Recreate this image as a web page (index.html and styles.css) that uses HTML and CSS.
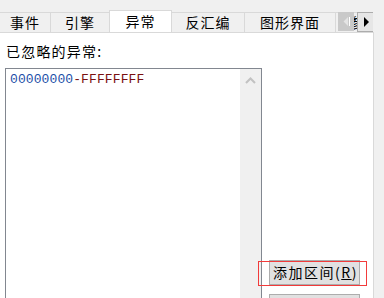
FILE: index.html
```html
<!DOCTYPE html>
<html>
<head>
<meta charset="utf-8">
<link rel="stylesheet" href="styles.css">
</head>
<body>
<div class="tabbar">
  <div class="tab t1">事件</div>
  <div class="tab t2">引擎</div>
  <div class="tab t3 active">异常</div>
  <div class="tab t4">反汇编</div>
  <div class="tab t5">图形界面</div>
  <div class="tab t6">参</div>
  <div class="scrollbtns">
    <div class="sbtn left"><svg width="16" height="19" viewBox="0 0 16 19"><polygon points="10,5 10,14 5.5,9.5" fill="#e4e4e4"/><rect x="11" y="5" width="1" height="9" fill="#fff"/></svg></div>
    <div class="sbtn right"><svg width="16" height="18" viewBox="0 0 16 18"><polygon points="6,4 6,14 11,9" fill="#000"/></svg></div>
  </div>
</div>
<div class="panel">
  <div class="label">已忽略的异常:</div>
  <div class="content">
    <div class="listbox">
      <div class="items">
        <div class="item"><span class="lo">00000000</span><span class="hi">-FFFFFFFF</span></div>
      </div>
      <div class="vscroll"><svg width="21" height="22" viewBox="0 0 21 22"><polyline points="6,14 10.5,9.5 15,14" fill="none" stroke="#c2c2c2" stroke-width="2"/></svg></div>
    </div>
    <div class="side">
      <div class="btn">添加区间(<u>R</u>)</div>
      <div class="btn second"></div>
      <div class="highlight"></div>
    </div>
  </div>
</div>
</body>
</html>
```
FILE: styles.css
```css
html, body {
  margin: 0;
  padding: 0;
}
body {
  width: 384px;
  height: 298px;
  overflow: hidden;
  background: #f0f0f0;
  font-family: "Noto Sans CJK SC", "Microsoft YaHei", sans-serif;
  font-size: 14px;
  color: #000;
}
.tabbar {
  position: relative;
  height: 32px;
  padding-top: 12px;
  box-sizing: border-box;
  display: flex;
  width: 373px;
  overflow: hidden;
}
.tab {
  height: 20px;
  box-sizing: border-box;
  border-top: 1px solid #d9d9d9;
  border-right: 1px solid #d9d9d9;
  line-height: 19px;
  text-align: center;
  flex: none;
  background: #f0f0f0;
  letter-spacing: 1px;
}
.t1 { width: 51px; }
.t2 { width: 59px; }
.t3 { width: 63px; }
.t4 { width: 73px; }
.t5 { width: 91px; }
.t6 { width: 36px; text-align: left; padding-left: 13px; }
.tab.active {
  background: #fff;
  height: 23px;
  margin-top: -2px;
  border-left: 1px solid #d9d9d9;
  margin-left: -1px;
  position: relative;
  z-index: 1;
  line-height: 21px;
}
.scrollbtns {
  position: absolute;
  left: 338px;
  top: 12px;
  display: flex;
  gap: 3px;
  z-index: 2;
}
.sbtn {
  height: 19px;
  box-sizing: border-box;
}
.sbtn.left {
  width: 16px;
  background: #c9c9c9;
}
.sbtn.right {
  width: 17px;
  height: 20px;
  background: #e6e6e6;
  border: 1px solid #acacac;
}
.sbtn svg { display: block; }
.panel {
  background: #fff;
  width: 374px;
  box-sizing: border-box;
  border-top: 1px solid #d9d9d9;
  border-right: 1px solid #d9d9d9;
  height: 266px;
  overflow: hidden;
  padding: 10px 0 0 5px;
}
.label {
  line-height: 16px;
  height: 16px;
  padding-left: 1px;
  letter-spacing: 1.2px;
}
.content {
  display: flex;
  margin-top: 9px;
  position: relative;
}
.listbox {
  width: 257px;
  height: 230px;
  box-sizing: border-box;
  border: 1px solid #828790;
  border-bottom: none;
  display: flex;
}
.items {
  flex: 1;
  padding: 4px 0 0 4px;
}
.item {
  font-family: "Liberation Mono", "DejaVu Sans Mono", monospace;
  font-size: 13px;
  line-height: 14px;
  letter-spacing: 0.1px;
}
.lo { color: #1d4fa8; }
.hi { color: #7a1010; }
.vscroll {
  width: 21px;
  background: #f0f0f0;
}
.vscroll svg { display: block; }
.side {
  flex: none;
  position: relative;
  padding-left: 7px;
  padding-top: 192px;
  display: flex;
  flex-direction: column;
  gap: 9px;
}
.btn {
  width: 91px;
  height: 25px;
  box-sizing: border-box;
  background: #e1e1e1;
  border: 1px solid #adadad;
  line-height: 22px;
  padding-left: 3px;
  white-space: nowrap;
  font-size: 14px;
  letter-spacing: 1.5px;
  overflow: hidden;
}
.btn u { text-underline-offset: 1px; }
.highlight {
  position: absolute;
  left: -4px;
  top: 193px;
  width: 109px;
  height: 25px;
  box-sizing: border-box;
  border: 1px solid #f23b3b;
}
```
